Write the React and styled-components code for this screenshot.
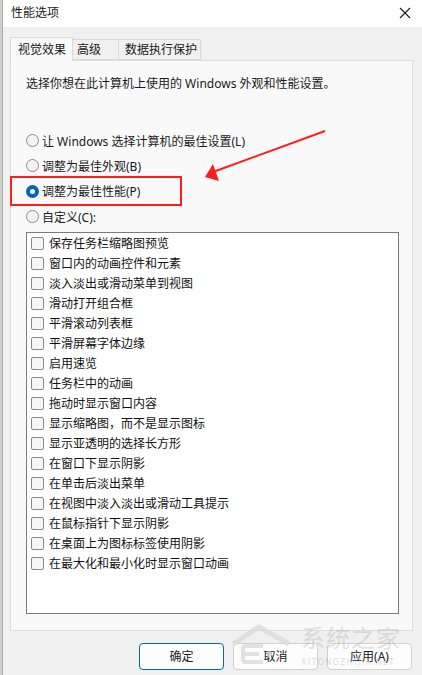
import React from 'react'
import styled, { createGlobalStyle } from 'styled-components'

const GlobalStyle = createGlobalStyle`
  html, body {
    margin: 0;
    padding: 0;
    background: #f0f0f0;
  }
  body {
    font-family: "Noto Sans", "Noto Sans CJK SC", sans-serif;
    font-size: 12px;
    color: #1a1a1a;
  }
`

const effects = [
  '保存任务栏缩略图预览',
  '窗口内的动画控件和元素',
  '淡入淡出或滑动菜单到视图',
  '滑动打开组合框',
  '平滑滚动列表框',
  '平滑屏幕字体边缘',
  '启用速览',
  '任务栏中的动画',
  '拖动时显示窗口内容',
  '显示缩略图，而不是显示图标',
  '显示亚透明的选择长方形',
  '在窗口下显示阴影',
  '在单击后淡出菜单',
  '在视图中淡入淡出或滑动工具提示',
  '在鼠标指针下显示阴影',
  '在桌面上为图标标签使用阴影',
  '在最大化和最小化时显示窗口动画',
]

const radios = [
  { label: '让 Windows 选择计算机的最佳设置(L)', on: false },
  { label: '调整为最佳外观(B)', on: false },
  { label: '调整为最佳性能(P)', on: true },
  { label: '自定义(C):', on: false },
]

const tabs = [
  { label: '视觉效果', w: 63, pl: 7, active: true },
  { label: '高级', w: 46, pl: 4 },
  { label: '数据执行保护', w: 82, pl: 6 },
]

const App = () => {
  return (
    <Frame>
      <GlobalStyle />
      <Strip />
      <Window>
        <TitleBar>
          <span>性能选项</span>
          <Close width="12" height="12" viewBox="0 0 12 12">
            <path d="M1 1 L11 11 M11 1 L1 11" stroke="#1a1a1a" strokeWidth="1.1" fill="none" />
          </Close>
        </TitleBar>
        <Body>
          <TabRow>
            {tabs.map(t => (
              <Tab key={t.label} $w={t.w} $pl={t.pl} $active={t.active}>{t.label}</Tab>
            ))}
          </TabRow>
          <Panel>
            <Intro>选择你想在此计算机上使用的 Windows 外观和性能设置。</Intro>
            <RadioGroup>
              {radios.map(r => (
                <RadioRow key={r.label}>
                  <Radio $on={r.on} />
                  <span>{r.label}</span>
                </RadioRow>
              ))}
            </RadioGroup>
            <ListBox>
              {effects.map(e => (
                <CheckRow key={e}>
                  <Check />
                  <span>{e}</span>
                </CheckRow>
              ))}
            </ListBox>
          </Panel>
          <Buttons>
            <Button $primary>确定</Button>
            <Button>取消</Button>
            <Button>应用(A)</Button>
          </Buttons>
        </Body>
      </Window>

      <Highlight />
      <Arrow width="422" height="675" viewBox="0 0 422 675">
        <line x1="325" y1="131" x2="213" y2="172" stroke="#ff1c1c" strokeWidth="2" />
        <polygon points="205,177 213,164 219,181" fill="#ff1c1c" />
      </Arrow>
      <Watermark>
        <svg width="64" height="42" viewBox="0 0 64 42">
          <path d="M4 20 L30 3 L60 20" stroke="#dadada" strokeWidth="5" fill="none" />
          <path d="M14 22 H34 M14 30 H30 M14 38 H34 M14 22 V38" stroke="#dadada" strokeWidth="4" fill="none" />
          <circle cx="40" cy="30" r="3" fill="#dadada" />
        </svg>
        <MarkText>
          <MarkBig>系统之家</MarkBig>
          <MarkSmall>XITONGZHIJIA.NET</MarkSmall>
        </MarkText>
      </Watermark>
    </Frame>
  )
}

export default App

const Frame = styled.div`
  position: relative;
  display: flex;
  width: 422px;
  height: 675px;
  overflow: hidden;
  background: #f0f0f0;
`

const Strip = styled.div`
  width: 3px;
  flex: none;
  background: linear-gradient(to right, #cfcfcf 0 2px, #a9a9a9 2px);
`

const Window = styled.div`
  flex: 1;
  display: flex;
  flex-direction: column;
`

const TitleBar = styled.div`
  height: 27px;
  background: #ffffff;
  display: flex;
  align-items: center;
  justify-content: space-between;
  padding: 0 11px 2px 8px;
  box-sizing: border-box;
  line-height: 20px;
`

const Close = styled.svg`
  display: block;
`

const Body = styled.div`
  padding: 10px 9px 0 7px;
`

const TabRow = styled.div`
  display: flex;
  align-items: flex-end;
  height: 23px;
  position: relative;
  z-index: 1;
`

const Tab = styled.div`
  box-sizing: border-box;
  width: ${p => p.$w}px;
  padding-left: ${p => p.$pl}px;
  height: ${p => (p.$active ? 24 : 21)}px;
  margin-bottom: ${p => (p.$active ? -1 : 0)}px;
  line-height: ${p => (p.$active ? 23 : 20)}px;
  background: ${p => (p.$active ? '#f9f9f9' : '#f0f0f0')};
  border: 1px solid #d9d9d9;
  border-bottom: ${p => (p.$active ? 'none' : '1px solid #d9d9d9')};
  border-left: ${p => (p.$active ? '1px solid #d9d9d9' : 'none')};
  color: #1a1a1a;
`

const Panel = styled.div`
  box-sizing: border-box;
  height: 571px;
  background: #f9f9f9;
  border: 1px solid #dcdcdc;
  padding: 13px 13px 0 15px;
`

const Intro = styled.div`
  line-height: 20px;
`

const RadioGroup = styled.div`
  margin-top: 34px;
  display: flex;
  flex-direction: column;
`

const RadioRow = styled.div`
  height: 25.3px;
  display: flex;
  align-items: center;
  gap: 3px;
`

const Radio = styled.span`
  box-sizing: border-box;
  width: 13px;
  height: 13px;
  border-radius: 50%;
  flex: none;
  border: ${p => (p.$on ? '4px solid #0067c0' : '1px solid #8b8b8b')};
  background: ${p => (p.$on ? '#ffffff' : '#f3f3f3')};
`

const ListBox = styled.div`
  box-sizing: border-box;
  margin-top: 3px;
  width: 373px;
  height: 382px;
  background: #ffffff;
  border: 1px solid #7a7a7a;
  padding: 0 0 0 4px;
`

const CheckRow = styled.div`
  height: 20px;
  display: flex;
  align-items: center;
  gap: 5px;
  color: #111111;
`

const Check = styled.span`
  box-sizing: border-box;
  width: 13px;
  height: 13px;
  flex: none;
  border: 1px solid #8a8a8a;
  border-radius: 2px;
  background: #f6f6f6;
`

const Buttons = styled.div`
  display: flex;
  justify-content: flex-end;
  gap: 9px;
  margin-top: 12px;
  padding-right: 1px;
`

const Button = styled.div`
  box-sizing: border-box;
  width: 85px;
  height: 27px;
  line-height: 25px;
  text-align: center;
  border-radius: 4px;
  background: #fdfdfd;
  border: 1px solid ${p => (p.$primary ? '#0067c0' : '#d0d0d0')};
  color: #1a1a1a;
`

const Highlight = styled.div`
  position: absolute;
  left: 10px;
  top: 176px;
  width: 172px;
  height: 30px;
  box-sizing: border-box;
  border: 2px solid #ff1c1c;
  pointer-events: none;
`

const Arrow = styled.svg`
  position: absolute;
  left: 0;
  top: 0;
  pointer-events: none;
`

const Watermark = styled.div`
  position: absolute;
  left: 229px;
  top: 624px;
  display: flex;
  align-items: flex-start;
  gap: 8px;
  pointer-events: none;
  opacity: 0.75;
`

const MarkText = styled.div`
  width: 110px;
  display: flex;
  flex-direction: column;
  align-items: flex-start;
`

const MarkBig = styled.div`
  font-family: "Noto Sans CJK SC", sans-serif;
  font-size: 24px;
  line-height: 26px;
  letter-spacing: 1px;
  color: rgba(150, 150, 150, 0.35);
`

const MarkSmall = styled.div`
  font-family: "DejaVu Sans", sans-serif;
  font-size: 8px;
  line-height: 10px;
  letter-spacing: 1.3px;
  margin-top: 8px;
  color: rgba(150, 150, 150, 0.45);
`
